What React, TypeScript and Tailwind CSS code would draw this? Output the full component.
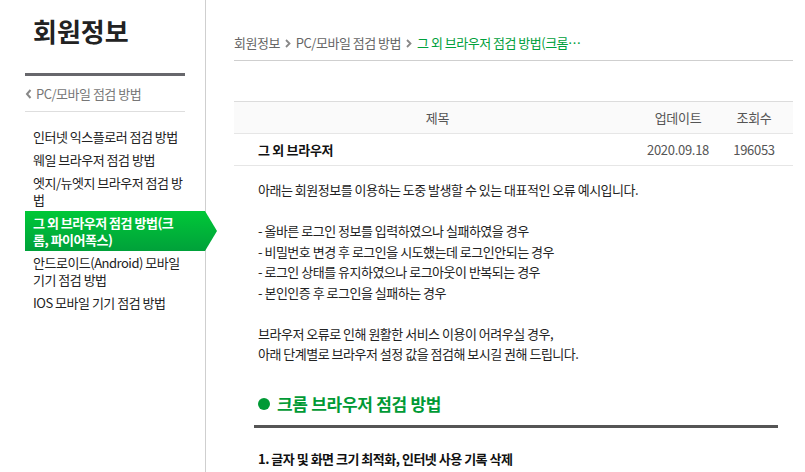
import React from "react";

const menu = [
  { label: "인터넷 익스플로러 점검 방법" },
  { label: "웨일 브라우저 점검 방법" },
  { label: "엣지/뉴엣지 브라우저 점검 방법" },
  { label: "그 외 브라우저 점검 방법(크롬, 파이어폭스)", active: true },
  { label: "안드로이드(Android) 모바일 기기 점검 방법" },
  { label: "IOS 모바일 기기 점검 방법" },
];

const errors = [
  "- 올바른 로그인 정보를 입력하였으나 실패하였을 경우",
  "- 비밀번호 변경 후 로그인을 시도했는데 로그인안되는 경우",
  "- 로그인 상태를 유지하였으나 로그아웃이 반복되는 경우",
  "- 본인인증 후 로그인을 실패하는 경우",
];

function Chevron() {
  return (
    <svg width="6" height="9" viewBox="0 0 6 9" className="mx-[5px]">
      <path d="M1 1 L4.5 4.5 L1 8" fill="none" stroke="#888" strokeWidth="1.8" />
    </svg>
  );
}

function Sidebar() {
  return (
    <aside className="w-[206px] shrink-0 border-r border-[#cfcfcf] pl-[25px] pr-[20px]">
      <h1 className="pl-[8px] pt-[14px] text-[26px] font-bold leading-[34px] text-[#222]">회원정보</h1>
      <div className="mt-[25px] h-[3px] bg-[#67676c]" />
      <div className="flex h-[36px] items-center border-b border-[#dedede] text-[13px] tracking-[-0.5px] text-[#777]">
        <svg width="7" height="10" viewBox="0 0 7 10" className="mr-[4px]">
          <path d="M5.5 1 L2 5 L5.5 9" fill="none" stroke="#888" strokeWidth="2" />
        </svg>
        PC/모바일 점검 방법
      </div>
      <ul className="mt-[13px] text-[13px] leading-[17px] tracking-[-0.5px] text-[#222]">
        {menu.map((m) =>
          m.active ? (
            <li key={m.label} className="relative -mr-[20px]">
              <div className="bg-gradient-to-b from-[#00c837] to-[#00a13a] py-[3px] pl-[8px] pr-[20px] font-bold text-white">
                {m.label}
              </div>
              <svg className="absolute right-[-12px] top-0 h-full w-[12px]" viewBox="0 0 12 40" preserveAspectRatio="none">
                <defs>
                  <linearGradient id="ag" x1="0" y1="0" x2="0" y2="1">
                    <stop offset="0" stopColor="#00c837" />
                    <stop offset="1" stopColor="#00a13a" />
                  </linearGradient>
                </defs>
                <polygon points="0,0 12,20 0,40" fill="url(#ag)" />
              </svg>
            </li>
          ) : (
            <li key={m.label} className="py-[3px] pl-[8px]">
              {m.label}
            </li>
          )
        )}
      </ul>
    </aside>
  );
}

function Main() {
  return (
    <main className="flex-1 pl-[28px] pr-[12px]">
      <nav className="flex h-[61px] items-end border-b border-[#cfcfcf] pb-[8px] text-[13px] tracking-[-0.5px] text-[#666]">
        <span>회원정보</span>
        <span className="mb-[4px]"><Chevron /></span>
        <span>PC/모바일 점검 방법</span>
        <span className="mb-[4px]"><Chevron /></span>
        <span className="text-[#00a03c]">그 외 브라우저 점검 방법(크롬…</span>
      </nav>

      <table className="mt-[40px] w-full border-t border-[#dcdcdc] text-[13px] tracking-[-0.3px]">
        <thead>
          <tr className="h-[32px] border-b border-[#e6e6e6] bg-[#fafafa] text-[#555]">
            <th className="font-normal">제목</th>
            <th className="w-[74px] font-normal">업데이트</th>
            <th className="w-[78px] font-normal">조회수</th>
          </tr>
        </thead>
        <tbody>
          <tr className="h-[32px] border-b border-[#e6e6e6]">
            <td className="pl-[24px] font-bold text-[#111]">그 외 브라우저</td>
            <td className="text-center text-[#555]">2020.09.18</td>
            <td className="text-center text-[#555]">196053</td>
          </tr>
        </tbody>
      </table>

      <div className="pl-[24px] pr-[15px]">
        <div className="mt-[14px] text-[13px] leading-[20.5px] tracking-[-0.5px] text-[#222]">
          <p>아래는 회원정보를 이용하는 도중 발생할 수 있는 대표적인 오류 예시입니다.</p>
          <p className="mt-[20.5px]">
            {errors.map((e) => (
              <span key={e} className="block">{e}</span>
            ))}
          </p>
          <p className="mt-[20.5px]">
            브라우저 오류로 인해 원활한 서비스 이용이 어려우실 경우,
            <br />
            아래 단계별로 브라우저 설정 값을 점검해 보시길 권해 드립니다.
          </p>
        </div>

        <h2 className="mt-[27px] flex items-center pb-[9px] text-[17px] font-bold leading-[24px] tracking-[-0.3px] text-[#009a35]">
          <span className="mr-[7px] inline-block h-[12px] w-[12px] rounded-full bg-[#009a35]" />
          크롬 브라우저 점검 방법
        </h2>
        <div className="-ml-[4px] h-[3px] bg-[#555]" />

        <p className="mt-[21px] text-[13px] font-bold leading-[20px] tracking-[-0.5px] text-[#111]">
          1. 글자 및 화면 크기 최적화, 인터넷 사용 기록 삭제
        </p>
      </div>
    </main>
  );
}

export default function App() {
  return (
    <div
      className="flex h-[472px] w-[805px] overflow-hidden bg-white"
      style={{ fontFamily: '"Noto Sans CJK KR", "Noto Sans", sans-serif' }}
    >
      <Sidebar />
      <Main />
    </div>
  );
}
